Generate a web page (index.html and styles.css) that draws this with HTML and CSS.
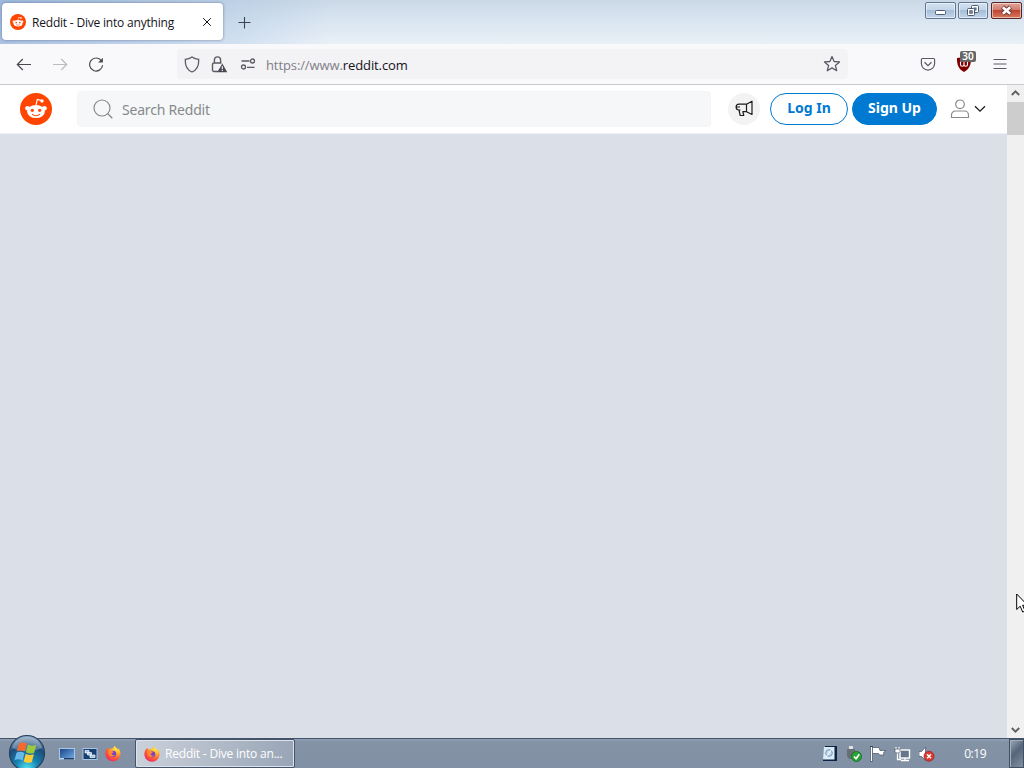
FILE: index.html
```
<!DOCTYPE html>
<html lang="en">
<head>
  <meta charset="utf-8">
  <title>Reddit - Dive into anything</title>
  <link rel="stylesheet" href="styles.css">
</head>
<body>

<!-- shared icons -->
<svg class="defs" width="0" height="0">
  <symbol id="snoo" viewBox="0 0 32 32">
    <circle cx="16" cy="16" r="16" fill="#ff4500"/>
    <path d="M16 12l1.300-5.500 4.600 1.100" fill="none" stroke="#fff" stroke-width="1.100"/>
    <circle cx="22" cy="8" r="1.700" fill="#fff"/>
    <circle cx="7.500" cy="15.300" r="2.300" fill="#fff"/>
    <circle cx="24.500" cy="15.300" r="2.300" fill="#fff"/>
    <ellipse cx="16" cy="18.500" rx="8.900" ry="6.600" fill="#fff"/>
    <circle cx="12.300" cy="17.300" r="1.600" fill="#ff4500"/>
    <circle cx="19.700" cy="17.300" r="1.600" fill="#ff4500"/>
    <path d="M12.400 21.400c2 1.600 5.200 1.600 7.200 0" fill="none" stroke="#ff4500" stroke-width="1.100" stroke-linecap="round"/>
  </symbol>
  <symbol id="firefox" viewBox="0 0 16 16">
    <radialGradient id="ffBody" cx=".75" cy=".15" r="1">
      <stop offset="0" stop-color="#fff04a"/>
      <stop offset=".35" stop-color="#ffb02e"/>
      <stop offset=".65" stop-color="#ff5a36"/>
      <stop offset="1" stop-color="#e8206f"/>
    </radialGradient>
    <path d="M2 3.300L3 1.800l1 1.800 2-.4C8 3 8.300 1.700 9.800.2c.6 1.700 2.200 2.200 3 3.800l.8-1c1.800 2.400 2.300 4.600 1.800 6.800A7.600 7.600 0 0 1 .4 9C.2 6.600.8 4.800 2 3.300z" fill="url(#ffBody)"/>
    <circle cx="8.200" cy="8.300" r="3.100" fill="#7542c9"/>
    <path d="M3 5.300c2-.8 3.600 0 5 .6 1 .3.300 1.600-1.400 1.700-.2 1.900 2 2.500 3.400 1.700-1.300 2.600-5.800 2.300-6.400-1.200z" fill="#ff8b2b"/>
  </symbol>
</svg>

<div class="titlebar">
  <div class="tab">
    <svg class="tab-icon" width="16" height="16"><use href="#snoo"/></svg>
    <span class="tab-title">Reddit - Dive into anything</span>
    <svg class="tab-close" width="10" height="10" viewBox="0 0 10 10"><path d="M1.200 1.200l7.600 7.600M8.800 1.200L1.200 8.800" stroke="#15141a"/></svg>
  </div>
  <svg class="new-tab" width="13" height="13" viewBox="0 0 13 13"><path d="M6.500 1v11.500M.5 6.500h12" stroke="#3b4454" stroke-width="1.100"/></svg>
  <div class="window-buttons">
    <div class="win-btn">
      <svg width="29" height="16" viewBox="0 0 29 16"><rect x="9.500" y="7.500" width="10" height="4" rx="1" fill="#fff" stroke="#4b5a70"/></svg>
    </div>
    <div class="win-btn">
      <svg width="28" height="16" viewBox="0 0 28 16"><g fill="#fff" stroke="#4b5a70"><rect x="12.500" y="2.500" width="7" height="7" rx="1"/><rect x="15" y="5" width="2" height="2" fill="#8fa9c6"/><rect x="8.500" y="5.500" width="7" height="7" rx="1"/><rect x="10.800" y="7.800" width="2.400" height="2.400" fill="#8fa9c6"/></g></svg>
    </div>
    <div class="win-btn close">
      <svg width="29" height="16" viewBox="0 0 29 16"><path d="M10.500 4l8 7M18.500 4l-8 7" stroke="#6b3532" stroke-width="4.400"/><path d="M10.800 4.300l7.400 6.400M18.200 4.300l-7.400 6.400" stroke="#fff" stroke-width="2.600"/></svg>
    </div>
  </div>
</div>

<div class="toolbar">
  <div class="nav-buttons">
    <svg width="16" height="16" viewBox="0 0 16 16"><path d="M15 8.500H1.500M6.800 3L1.300 8.500l5.500 5.500" fill="none" stroke="#4a4950" stroke-width="1.200"/></svg>
    <svg width="16" height="16" viewBox="0 0 16 16"><path d="M1 8.500h13.500M9.200 3l5.500 5.500-5.500 5.500" fill="none" stroke="#bcbbc1" stroke-width="1.200"/></svg>
    <svg width="16" height="16" viewBox="0 0 16 16"><path d="M13.500 4.800A6.500 6.500 0 1 0 14.600 9.300" fill="none" stroke="#4a4950" stroke-width="1.200"/><path d="M14.900 1.800v4.800H10.100z" fill="#4a4950"/></svg>
  </div>
  <div class="urlbar">
    <svg class="shield" width="16" height="17" viewBox="0 0 16 17"><path d="M8 1c2 1.500 4.300 2.200 6.700 2.400C15 9.300 13 14 8 16 3 14 1 9.300 1.300 3.400 3.700 3.200 6 2.500 8 1z" fill="none" stroke="#5b5b66" stroke-width="1.300"/></svg>
    <svg class="lock" width="17" height="17" viewBox="0 0 17 17"><path d="M7 15.500H3A1.500 1.500 0 0 1 1.500 14V8.500A1.500 1.500 0 0 1 3 7h7.500M3.400 7V4a3 3 0 0 1 6.200 0v3.800" fill="none" stroke="#5b5b66" stroke-width="1.400"/><path d="M11.300 7.500L16.300 16.200H6.300z" fill="#4a4a54"/><path d="M11.300 10.200v2.700M11.300 13.700v1.200" stroke="#fff" stroke-width="1.100"/></svg>
    <svg class="perms" width="16" height="12" viewBox="0 0 16 12"><g fill="none" stroke="#5b5b66" stroke-width="1.300"><path d="M1.500 3h8M7 9.300h7.500"/><circle cx="12.500" cy="3" r="2"/><circle cx="3.500" cy="9" r="2"/></g></svg>
    <span class="url">https://www.<span class="host">reddit.com</span></span>
    <svg class="star" width="18" height="18" viewBox="0 0 18 18"><path d="M9 1.500l2.100 5 5.400.4-4.100 3.500 1.300 5.300L9 12.900l-4.700 2.800 1.300-5.300L1.500 6.900l5.400-.4z" fill="none" stroke="#5b5b66" stroke-width="1.300" stroke-linejoin="round"/></svg>
  </div>
  <div class="toolbar-end">
    <svg width="16" height="16" viewBox="0 0 16 16"><path d="M2.500 2.500h11A1.300 1.300 0 0 1 14.600 3.800V7.500a6.600 6.600 0 0 1-13.200 0V3.800A1.300 1.300 0 0 1 2.500 2.500z" fill="none" stroke="#5b5b66" stroke-width="1.200"/><path d="M4.500 6.300L8 9.600l3.500-3.300" fill="none" stroke="#5b5b66" stroke-width="1.300"/></svg>
    <div class="blocker">
      <svg width="16" height="16" viewBox="0 0 16 16"><path d="M8 0c2 1.200 4.200 2 7 2C15.200 8.500 13.600 13 8 16 2.400 13 .8 8.500 1 2 3.800 2 6 1.200 8 0z" fill="#800000"/><path d="M4.500 5.500v3a1.700 1.700 0 0 0 3.500 0v-3M8 8.500a1.700 1.700 0 1 0 3.500 0v-3" fill="none" stroke="#fff" stroke-width="1.100"/></svg>
      <span class="badge">30</span>
    </div>
    <svg width="16" height="16" viewBox="0 0 16 16"><path d="M1.500 3.500h13M1.500 8h13M1.500 12.500h13" stroke="#5b5b66" stroke-width="1.200"/></svg>
  </div>
</div>

<div class="viewport">
  <div class="page">
    <div class="header">
      <svg class="logo" width="32" height="32"><use href="#snoo"/></svg>
      <div class="search">
        <svg width="20" height="20" viewBox="0 0 20 20"><circle cx="9" cy="9" r="8" fill="none" stroke="#878a8c" stroke-width="1.200"/><path d="M14.800 14.800l4.500 4.500" stroke="#878a8c" stroke-width="1.300"/></svg>
        <span>Search Reddit</span>
      </div>
      <div class="advertise">
        <svg width="20" height="20" viewBox="0 0 20 20"><path d="M12.500 5.200L18 2.200v13.300l-5.500-2.800M12.500 5.200H5a2.800 2.800 0 0 0 0 5.800h1.500M12.500 5.200v7.500H8.800l1 3.800H6.200L5 11M2.500 8h3.500" fill="none" stroke="#1c1c1c" stroke-width="1.200" stroke-linejoin="round"/></svg>
      </div>
      <div class="btn login">Log In</div>
      <div class="btn signup">Sign Up</div>
      <svg class="user" width="20" height="20" viewBox="0 0 20 20"><g fill="none" stroke="#878a8c" stroke-width="1.200"><circle cx="10" cy="5.300" r="4.300"/><path d="M1.500 18.500v-2.500a4 4 0 0 1 4-4h9a4 4 0 0 1 4 4v2.500z"/></g></svg>
      <svg class="caret" width="12" height="8" viewBox="0 0 12 8"><path d="M1 1.200l5 5 5-5" fill="none" stroke="#1c1c1c" stroke-width="1.300"/></svg>
    </div>
  </div>
  <div class="scrollbar">
    <svg width="17" height="17" viewBox="0 0 17 17"><path d="M4.800 10l3.700-3.700 3.700 3.700" fill="none" stroke="#606060" stroke-width="1.900"/></svg>
    <div class="thumb"></div>
    <svg width="17" height="17" viewBox="0 0 17 17"><path d="M4.800 7l3.700 3.700L12.200 7" fill="none" stroke="#606060" stroke-width="1.900"/></svg>
  </div>
</div>

<div class="taskbar">
  <svg class="start" width="38" height="38" viewBox="0 0 38 38">
    <radialGradient id="orb" cx=".5" cy=".95" r=".95">
      <stop offset="0" stop-color="#55e4f4"/>
      <stop offset=".35" stop-color="#1683af"/>
      <stop offset=".7" stop-color="#1e4c7b"/>
      <stop offset="1" stop-color="#8fa9c3"/>
    </radialGradient>
    <circle cx="19" cy="19" r="17.500" fill="url(#orb)" stroke="#26405d" stroke-width="1.200"/>
    <path d="M4 14C7 5 13 3 19 3s12 2 15 11c-9 4-21 4-30 0z" fill="#fff" opacity=".28"/>
    <path d="M11 9.500c2.900-1.500 5.200-1.200 7.700.3l-2 7.800c-2.500-1.400-5.200-1.700-7.900-.2z" fill="#f36a2b"/>
    <path d="M20 10.600c2.700 1.500 5.300 1.600 8.300.4l-2.100 7.700c-2.900 1.300-5.500 1.100-8.200-.4z" fill="#9bcb3c"/>
    <path d="M8.500 18.700c2.700-1.400 5.400-1.200 8 .3l-2 7.600c-2.600-1.400-5.300-1.700-8-.4z" fill="#69b8ed"/>
    <path d="M17.700 19.800c2.600 1.500 5.300 1.600 8.200.4l-2.100 7.700c-2.900 1.300-5.500 1.100-8.100-.4z" fill="#fdca36"/>
  </svg>
  <div class="quick-launch">
    <svg width="16" height="16" viewBox="0 0 16 16"><linearGradient id="desk" x2="1" y2="1"><stop stop-color="#163f83"/><stop offset="1" stop-color="#76b4ec"/></linearGradient><rect x=".5" y="2.500" width="15" height="11" fill="url(#desk)" stroke="#a8c5e2"/><path d="M1 12h14v1.500H1z" fill="#233c60"/><path d="M1 12h4v1.500H1z" fill="#b9d8ee"/></svg>
    <svg width="16" height="16" viewBox="0 0 16 16"><rect x="1" y="2.500" width="14" height="11" fill="#173f70" stroke="#a8c5e2"/><g fill="#9cc3e6" stroke="#fff" stroke-width=".7"><path d="M3 4.500h4v2.500H3zM5.500 6.500h4v2.500h-4zM8 9h5v2.500H8z"/></g></svg>
    <svg width="16" height="17"><use href="#firefox"/></svg>
  </div>
  <div class="task">
    <svg width="16" height="16"><use href="#firefox"/></svg>
    <span>Reddit - Dive into an...</span>
  </div>
  <div class="tray">
    <svg width="16" height="16" viewBox="0 0 16 16"><path d="M3 0h12v15H1v-2h2z" fill="#0c2348"/><path d="M2 1h10.500v12.500H1z" fill="#d9ebf5"/><circle cx="7" cy="7" r="3.300" fill="#c4dcec" stroke="#7197b8"/><path d="M4 11l6-8" stroke="#fff"/></svg>
    <svg width="16" height="16" viewBox="0 0 16 16"><path d="M3 0h4v3H3z" fill="#dfe3e6"/><path d="M1 3h8v6L6 13H3L1 10z" fill="#676f74"/><circle cx="10.500" cy="10.500" r="5" fill="#2aa336" stroke="#16762a"/><path d="M8 10.500l2 2.200 3.300-4.500" fill="none" stroke="#fff" stroke-width="1.600"/></svg>
    <svg width="16" height="16" viewBox="0 0 16 16"><path d="M1.500 0v15.500" stroke="#35435a" stroke-width="3"/><path d="M1.500 1v14" stroke="#fff" stroke-width="1.500"/><path d="M2.500 1.500H9L10 4.500h6l-2.500 2 .5 2.500H9.500L8.500 7.500h-6z" fill="#fff" stroke="#45546a" stroke-width=".7"/></svg>
    <svg width="17" height="16" viewBox="0 0 17 16"><rect x="6" y="4" width="9.500" height="8" fill="#66758a" stroke="#fff" stroke-width="1.400"/><path d="M7 14.500h8M11 12v2M2 1v2.500M5 1v2.500M3.500 6v7.500H7" fill="none" stroke="#fff" stroke-width="1.300"/><path d="M1 3h5v2.500L4.500 7h-2L1 5.500z" fill="#fff" stroke="#36465c" stroke-width=".6"/></svg>
    <svg width="16" height="16" viewBox="0 0 16 16"><path d="M0 5.500h2.500L6.500 1v13.500l-4-4H0z" fill="#fff" stroke="#445268" stroke-width=".7"/><circle cx="10" cy="10.300" r="5" fill="#d83a32" stroke="#a12624" stroke-width=".8"/><path d="M8 8.300l4 4M12 8.300l-4 4" stroke="#fff" stroke-width="1.500"/></svg>
  </div>
  <span class="clock">0:19</span>
  <div class="show-desktop"></div>
</div>

<svg class="cursor" width="12" height="20" viewBox="0 0 12 20"><path d="M.7 1v15.500l3.500-3.300 2.500 5.800 2.400-1-2.500-5.700h5z" fill="#fff" stroke="#000" stroke-width="1"/></svg>

</body>
</html>
```
FILE: styles.css
```
* {
  box-sizing: border-box;
}
body {
  display: flex;
  flex-direction: column;
  width: 1024px;
  height: 768px;
  margin: 0;
  overflow: hidden;
  font-family: "Noto Sans", "Open Sans", sans-serif;
}
svg {
  display: block;
  flex: none;
}
.defs {
  position: absolute;
}
.titlebar {
  display: flex;
  align-items: flex-start;
  height: 44px;
  background: linear-gradient(90deg, rgba(130, 165, 212, 0.6), rgba(160, 190, 225, 0.3) 240px, transparent 330px),
    linear-gradient(#cad8e6, #d9e5f0 20px, #e9f0f7 44px);
}
.tab {
  display: flex;
  align-items: center;
  width: 221px;
  height: 37px;
  margin: 3px 0 0 2px;
  padding: 2px 11px 0 8px;
  border-radius: 4px;
  background-color: #fff;
  box-shadow: 0 0 3px rgba(50, 70, 110, 0.6);
}
.tab-icon {
  margin-top: -2px;
}
.tab-title {
  margin-left: 6px;
  font-family: "Open Sans", sans-serif;
  font-size: 12px;
  letter-spacing: -0.2px;
  white-space: nowrap;
  color: #15141a;
}
.tab-close {
  margin: -1px 0 0 auto;
}
.new-tab {
  margin: 16px 0 0 15px;
}
.window-buttons {
  display: flex;
  gap: 2px;
  margin: 2px 2px 0 auto;
}
.win-btn {
  height: 17px;
  border: 1px solid #607694;
  border-radius: 2px;
  background: linear-gradient(#d3e1f0 0, #c3d5e8 45%, #a5bdd7 50%, #c4d7ea 100%);
  box-shadow: inset 0 0 0 1px rgba(255, 255, 255, 0.5);
}
.win-btn.close {
  margin-left: 1px;
  border-color: #592525;
  background: linear-gradient(#e2a69b 0, #d17c6d 45%, #bc4533 50%, #d77b5c 100%);
}
.toolbar {
  display: flex;
  align-items: center;
  height: 41px;
  border-bottom: 1px solid #c9c9ce;
  background-color: #f9f9fb;
}
.nav-buttons {
  display: flex;
  gap: 20px;
  margin-left: 16px;
}
.urlbar {
  display: flex;
  align-items: center;
  width: 671px;
  height: 30px;
  margin-left: 73px;
  padding: 0 7px;
  border-radius: 4px;
  background-color: #f3f2f5;
}
.lock {
  margin-left: 11px;
}
.perms {
  margin-left: 12px;
}
.url {
  margin-left: 10px;
  padding-top: 2px;
  font-family: "Open Sans", sans-serif;
  font-size: 13px;
  letter-spacing: -0.1px;
  color: #808087;
}
.host {
  color: #15141a;
}
.star {
  margin-left: auto;
}
.toolbar-end {
  display: flex;
  gap: 20px;
  margin: 0 16px 0 auto;
}
.blocker {
  position: relative;
}
.badge {
  position: absolute;
  top: -5px;
  left: 4px;
  width: 16px;
  height: 11px;
  border-radius: 2px;
  background-color: #666;
  font-size: 10px;
  font-weight: 600;
  line-height: 11px;
  text-align: center;
  color: #fff;
}
.viewport {
  display: flex;
  height: 653px;
}
.page {
  flex: 1;
  background-color: #dbdfe7;
}
.header {
  display: flex;
  align-items: center;
  height: 49px;
  padding-left: 20px;
  border-bottom: 1px solid #edeff1;
  background-color: #fff;
}
.search {
  display: flex;
  align-items: center;
  width: 634px;
  height: 36px;
  margin-left: 25px;
  padding-left: 15px;
  border: 1px solid #f4f5f7;
  border-radius: 4px;
  background-color: #f6f7f8;
}
.search span {
  margin-left: 9px;
  font-size: 14px;
  letter-spacing: -0.2px;
  color: #878a8c;
}
.advertise {
  display: flex;
  align-items: center;
  justify-content: center;
  width: 32px;
  height: 32px;
  margin-left: 17px;
  border-radius: 50%;
  background-color: #f3f3f3;
}
.btn {
  height: 32px;
  border: 1px solid #0079d3;
  border-radius: 16px;
  font-size: 14px;
  font-weight: bold;
  line-height: 28px;
  text-align: center;
}
.login {
  width: 78px;
  margin-left: 10px;
  color: #0079d3;
}
.signup {
  width: 85px;
  margin-left: 4px;
  background-color: #0079d3;
  color: #fff;
}
.user {
  margin-left: 13px;
}
.caret {
  margin-left: 4px;
}
.scrollbar {
  display: flex;
  flex-direction: column;
  width: 17px;
  background-color: #f0f0f0;
}
.thumb {
  height: 33px;
  margin-bottom: auto;
  background-color: #cdcdcd;
}
.taskbar {
  display: flex;
  align-items: center;
  height: 30px;
  border-top: 1px solid #42536a;
  background: linear-gradient(#91a1b5 0, #8492a6 3px, #8190a4 100%);
}
.start {
  margin: -6px 0 -4px 8px;
}
.quick-launch {
  display: flex;
  align-items: center;
  gap: 7px;
  margin-left: 13px;
}
.task {
  display: flex;
  align-items: center;
  width: 160px;
  height: 29px;
  margin-left: 14px;
  padding-left: 8px;
  border: 1px solid #43536a;
  border-radius: 2px;
  box-shadow: inset 0 0 0 1px #dde3ea;
  background: linear-gradient(100deg, #cbd2dc 0, #b4bdca 45%, #98a5b6 100%);
}
.task span {
  margin-left: 5px;
  font-family: "Open Sans", sans-serif;
  font-size: 12px;
  letter-spacing: -0.2px;
  white-space: nowrap;
  color: #fff;
}
.tray {
  display: flex;
  align-items: center;
  gap: 8px;
  margin-left: auto;
}
.clock {
  margin-left: 29px;
  font-family: "Open Sans", sans-serif;
  font-size: 12px;
  letter-spacing: -0.5px;
  color: #fff;
}
.show-desktop {
  width: 15px;
  height: 29px;
  margin-left: 23px;
  border: 1px solid #414f62;
  box-shadow: inset 1px 1px 0 #a5b0bf;
  background: linear-gradient(135deg, #9ba8b8 0, #56657a 45%, #8290a3 100%);
}
.cursor {
  position: absolute;
  top: 593px;
  left: 1016px;
}
```
